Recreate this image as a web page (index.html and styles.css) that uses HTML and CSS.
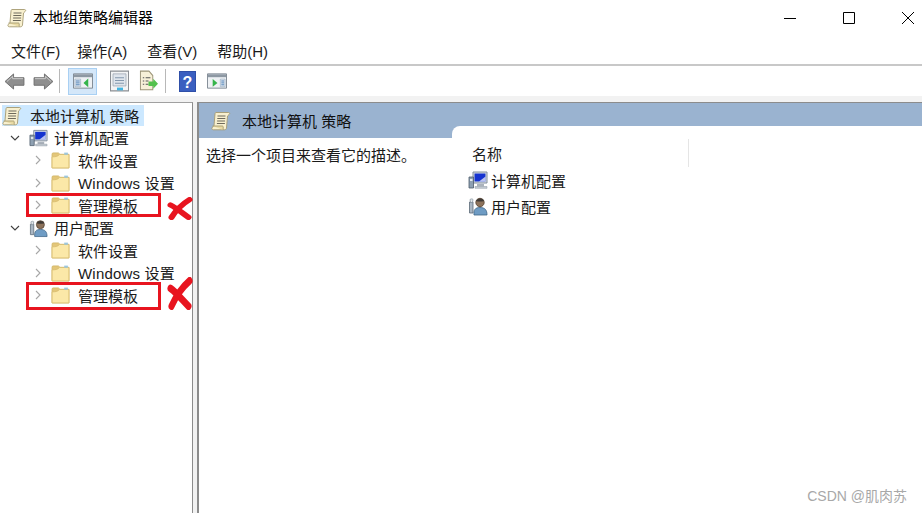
FILE: index.html
```html
<!DOCTYPE html>
<html lang="zh-CN">
<head>
    <meta charset="UTF-8">
    <title>本地组策略编辑器</title>
    <link rel="stylesheet" href="styles.css">
</head>
<body>
    <svg class="defs" width="0" height="0">
        <defs>
            <symbol id="scroll" viewBox="0 0 20 20">
                <path d="M5 1.500h12.500c1.200 0 1.500 1.200.7 1.900L16.500 5 15.500 17c-.2 1.200-1 1.800-2 1.800H2.500c-1.400 0-2-1.200-1.300-2.100L3 14.500 4 3c.1-1 .4-1.500 1-1.500z" fill="#f8f0cf" stroke="#a59a70" stroke-width=".9"/>
                <path d="M1.500 15h10c.8 0 .9 1.400.5 3.800" fill="#e9dba4" stroke="#a59a70" stroke-width=".9"/>
                <path d="M6.500 5h8M6.300 7.500h8M6.100 10h8M5.900 12.500h8" stroke="#6e6a5c" stroke-width="1"/>
            </symbol>
            <symbol id="folder" viewBox="0 0 18 18">
                <path d="M1 3.500c0-.8.4-1.200 1-1.200h5l1.500 1.400H17V16.500H1z" fill="#e3c679" stroke="#d2b566" stroke-width=".8"/>
                <path d="M1 6c3 0 5.500-.2 7-2.300h9v12.800H1z" fill="#fbe8a8" stroke="#d8bd70" stroke-width=".8"/>
                <path d="M12.500 2h3.500v2h-3.500z" fill="#9cc6de"/>
            </symbol>
            <symbol id="computer" viewBox="0 0 20 20">
                <path d="M5 2h14v11H5z" fill="#d8dde4" stroke="#7f8c9c"/>
                <path d="M6.500 3.500h11v8h-11z" fill="#1533d0"/>
                <path d="M11 11.500l6.500-5v5z" fill="#fff" opacity=".7"/>
                <path d="M9 14h7v2.500H9z" fill="#aab2bb"/>
                <path d="M7 16.500h12v1.800H7z" fill="#c5ccd4" stroke="#8a94a0" stroke-width=".5"/>
                <path d="M1 7h4.500v11H1z" fill="#8ea0b2" stroke="#4c5b6b" stroke-width=".8"/>
                <path d="M2 9h2.500v2H2z" fill="#e4e9ee"/>
            </symbol>
            <symbol id="user" viewBox="0 0 20 20">
                <path d="M6 19c-.5-5 1-7.500 6-7.500s7 2.500 7 7.500z" fill="#6f9cc4" stroke="#3e6486" stroke-width=".8"/>
                <circle cx="12" cy="6.500" r="4.200" fill="#8d735c" stroke="#54412f" stroke-width=".8"/>
                <path d="M8 5c1-3 7-3.500 8 0-2.500.8-5.500.8-8 0z" fill="#3f3a36"/>
                <path d="M1.500 6h3.500v11H1.500z" fill="#a9b6c3" stroke="#5a6876" stroke-width=".8"/>
                <path d="M2 3.500c1.200-.8 2.200-.8 3 0l-.5 3h-2z" fill="#dfe5ea" stroke="#6f7d8b" stroke-width=".6"/>
            </symbol>
            <symbol id="cross" viewBox="0 0 26 26" preserveAspectRatio="none">
                <path d="M3.500 9C9 12 14 17 21.500 23" fill="none" stroke="#e8141f" stroke-width="6" stroke-linecap="round"/>
                <path d="M22.500 3C16 7.500 9 15 4.500 23" fill="none" stroke="#e8141f" stroke-width="6" stroke-linecap="round"/>
            </symbol>
            <symbol id="chev-right" viewBox="0 0 8 10">
                <path d="M2 1l4 4-4 4" fill="none" stroke="#a6a6a6" stroke-width="1.100"/>
            </symbol>
            <symbol id="chev-down" viewBox="0 0 10 8">
                <path d="M1 2l4 4 4-4" fill="none" stroke="#404040" stroke-width="1.100"/>
            </symbol>
        </defs>
    </svg>

    <div class="window">
        <div class="titlebar">
            <svg class="title-icon"><use href="#scroll"/></svg>
            <span class="title-text">本地组策略编辑器</span>
            <div class="win-buttons">
                <svg class="win-btn" viewBox="0 0 14 14"><path d="M1 7.500h12" stroke="#000"/></svg>
                <svg class="win-btn" viewBox="0 0 14 14"><path d="M1.500 1.500h11v11h-11z" fill="none" stroke="#000"/></svg>
                <svg class="win-btn" viewBox="0 0 14 14"><path d="M1 1l12 12M13 1L1 13" stroke="#000"/></svg>
            </div>
        </div>

        <div class="menubar">
            <span class="menu-first">文件(F)</span>
            <span>操作(A)</span>
            <span>查看(V)</span>
            <span>帮助(H)</span>
        </div>

        <div class="toolbar">
            <svg class="tool arrow" viewBox="0 0 22 18"><path d="M1 9l9-8V5h11v8H10v4z" fill="#8f8f8f" stroke="#6e6e6e"/><path d="M3 9l6-5.500V6h11" fill="none" stroke="#cfcfcf"/></svg>
            <svg class="tool arrow" viewBox="0 0 22 18"><path d="M21 9l-9-8V5H1v8h11v4z" fill="#8f8f8f" stroke="#6e6e6e"/><path d="M2 6h11V3.500L19 9" fill="none" stroke="#cfcfcf"/></svg>
            <i class="sep sep-first"></i>
            <div class="tool-active">
                <svg class="tool-panel" viewBox="0 0 21 18"><path d="M.5 1.500h20v15H.5z" fill="#eef1f4" stroke="#7d8791"/><path d="M1 2h19v3H1z" fill="#8d98a3"/><path d="M2 7h6v8H2z" fill="#dfe7f0" stroke="#8fa3b8" stroke-width=".6"/><path d="M3 9h4M3 11h4M3 13h4" stroke="#4c7fb5"/><path d="M16 6.500l-5 4.500 5 4.500z" fill="#35b44a"/></svg>
            </div>
            <svg class="tool tool-doc" viewBox="0 0 19 20" preserveAspectRatio="none"><path d="M.5 1h18v18H.5z" fill="#f3f4f5" stroke="#8b8f94"/><path d="M3 3.500h13v11H3z" fill="#dfe5ec" stroke="#9aa4af" stroke-width=".7"/><path d="M5 7h9M5 9.500h9M5 12h9" stroke="#8498ad"/><path d="M7 16h6v2.500H7z" fill="#43b4e0"/></svg>
            <svg class="tool tool-doc" viewBox="0 0 20 20" preserveAspectRatio="none"><path d="M1.500 1h9l4 4v13h-13z" fill="#f7f0d8" stroke="#9c9478"/><path d="M4 7h1.500M7 7h5M4 10h1.500M7 10h3M4 13h1.500M7 13h3" stroke="#555"/><path d="M10 10.500h5V8l5 4.500-5 4.500v-2.500h-5z" fill="#54c14d"/></svg>
            <i class="sep"></i>
            <svg class="tool tool-help" viewBox="0 0 17 21"><path d="M0 0h17v21H0z" fill="#2f4fa8"/><path d="M1 1h15v19H1z" fill="#3a5fc0"/><text class="help-mark" x="8.500" y="16.500" text-anchor="middle">?</text></svg>
            <svg class="tool tool-panel-2" viewBox="0 0 21 18"><path d="M.5 1.500h20v15H.5z" fill="#eef1f4" stroke="#7d8791"/><path d="M1 2h19v3H1z" fill="#8d98a3"/><path d="M14 7h5v8h-5z" fill="#dfe7f0" stroke="#8fa3b8" stroke-width=".6"/><path d="M15 9h3M15 11h3M15 13h3" stroke="#4c7fb5"/><path d="M6 7l5 4-5 4z" fill="#35b44a"/></svg>
        </div>

        <div class="main">
            <div class="tree">
                <div class="tree-row level-0">
                    <div class="root-label">
                        <svg class="ico"><use href="#scroll"/></svg>
                        <span>本地计算机 策略</span>
                    </div>
                </div>
                <div class="tree-row level-1">
                    <svg class="chev-d"><use href="#chev-down"/></svg>
                    <svg class="ico"><use href="#computer"/></svg>
                    <span>计算机配置</span>
                </div>
                <div class="tree-row level-2">
                    <svg class="chev-r"><use href="#chev-right"/></svg>
                    <svg class="ico"><use href="#folder"/></svg>
                    <span>软件设置</span>
                </div>
                <div class="tree-row level-2">
                    <svg class="chev-r"><use href="#chev-right"/></svg>
                    <svg class="ico"><use href="#folder"/></svg>
                    <span class="latin">Windows 设置</span>
                </div>
                <div class="tree-row level-2 marked">
                    <svg class="chev-r"><use href="#chev-right"/></svg>
                    <svg class="ico"><use href="#folder"/></svg>
                    <span>管理模板</span>
                    <svg class="cross"><use href="#cross"/></svg>
                </div>
                <div class="tree-row level-1">
                    <svg class="chev-d"><use href="#chev-down"/></svg>
                    <svg class="ico"><use href="#user"/></svg>
                    <span>用户配置</span>
                </div>
                <div class="tree-row level-2">
                    <svg class="chev-r"><use href="#chev-right"/></svg>
                    <svg class="ico"><use href="#folder"/></svg>
                    <span>软件设置</span>
                </div>
                <div class="tree-row level-2">
                    <svg class="chev-r"><use href="#chev-right"/></svg>
                    <svg class="ico"><use href="#folder"/></svg>
                    <span class="latin">Windows 设置</span>
                </div>
                <div class="tree-row level-2 marked marked-tall">
                    <svg class="chev-r"><use href="#chev-right"/></svg>
                    <svg class="ico"><use href="#folder"/></svg>
                    <span>管理模板</span>
                    <svg class="cross cross-big"><use href="#cross"/></svg>
                </div>
            </div>

            <div class="detail">
                <div class="detail-head">
                    <svg class="ico"><use href="#scroll"/></svg>
                    <span>本地计算机 策略</span>
                    <i class="tab-notch"></i>
                </div>
                <div class="detail-body">
                    <p class="desc">选择一个项目来查看它的描述。</p>
                    <div class="list">
                        <div class="list-head"><span>名称</span></div>
                        <div class="list-row">
                            <svg class="ico"><use href="#computer"/></svg>
                            <span>计算机配置</span>
                        </div>
                        <div class="list-row">
                            <svg class="ico"><use href="#user"/></svg>
                            <span>用户配置</span>
                        </div>
                    </div>
                </div>
                <div class="watermark">CSDN @肌肉苏</div>
            </div>
        </div>
    </div>
</body>
</html>
```

FILE: styles.css
```css
*, *::before {
    box-sizing: border-box;
}
html, body {
    margin: 0;
    height: 100%;
}
body {
    font-family: "Liberation Sans", "Noto Sans CJK SC", sans-serif;
    font-size: 15px;
    color: #1a1a1a;
    background-color: #fff;
    overflow: hidden;
}
.defs {
    position: absolute;
}
.window {
    height: 513px;
    display: flex;
    flex-direction: column;
}
.ico {
    width: 20px;
    height: 20px;
    flex: none;
}
.titlebar {
    height: 36px;
    display: flex;
    align-items: center;
    padding-left: 7px;
    color: #000;
}
.title-icon {
    width: 20px;
    height: 20px;
}
.title-text {
    margin: 0 0 4px 6px;
}
.win-buttons {
    margin-left: auto;
    display: flex;
    gap: 45px;
    padding-right: 7px;
}
.win-btn {
    width: 14px;
    height: 14px;
}
.menubar {
    height: 30px;
    display: flex;
    align-items: center;
    gap: 20px;
    padding-left: 11px;
    border-bottom: 2px solid #c8c8c8;
}
.menu-first {
    margin-right: -3px;
}
.toolbar {
    height: 30px;
    display: flex;
    align-items: center;
    padding-left: 4px;
}
.tool {
    flex: none;
}
.arrow {
    width: 21px;
    height: 17px;
    margin-right: 8px;
}
.sep {
    width: 1px;
    height: 24px;
    margin: 0 13px 0 -3px;
    background-color: #b8b8b8;
}
.sep-first {
    margin-right: 8px;
}
.tool-active {
    width: 29px;
    height: 27px;
    display: flex;
    align-items: center;
    justify-content: center;
    background-color: #d4e7f9;
    border: 1px solid #a9d0f3;
    margin-right: 13px;
}
.tool-panel, .tool-panel-2 {
    width: 20px;
    height: 18px;
}
.tool-doc {
    width: 19px;
    height: 22px;
    margin-right: 10px;
}
.tool-help {
    width: 17px;
    height: 21px;
    margin-right: 11px;
}
.help-mark {
    font-size: 16px;
    font-weight: bold;
    fill: #fff;
}
.main {
    flex: 1;
    display: flex;
    background-color: #f2f2f2;
    padding-top: 6px;
}
.tree {
    width: 193px;
    background-color: #fff;
    border-top: 1px solid #a0a0a0;
    border-right: 1px solid #8c8c8c;
    padding-top: 2px;
    flex: none;
}
.tree-row {
    position: relative;
    height: 22.5px;
    display: flex;
    align-items: center;
    white-space: nowrap;
}
.latin {
    letter-spacing: .2px;
}
.level-0 {
    height: 21.5px;
    padding-left: 2px;
}
.root-label {
    display: flex;
    align-items: center;
    gap: 8px;
    height: 21px;
    padding-right: 5px;
    background-color: #cce8ff;
}
.level-1 {
    padding-left: 10px;
}
.level-1 .ico {
    margin: 0 6px 0 9px;
    width: 19px;
}
.level-2 {
    padding-left: 34px;
}
.level-2 .ico {
    margin: 0 8px 0 9px;
    width: 19px;
}
.chev-d {
    width: 10px;
    height: 8px;
    flex: none;
}
.chev-r {
    width: 8px;
    height: 10px;
    flex: none;
}
.marked::before {
    content: "";
    position: absolute;
    left: 26px;
    top: -1px;
    width: 135px;
    height: 24px;
    border: 3px solid #e8141f;
}
.marked-tall::before {
    top: -2px;
    height: 28px;
}
.cross {
    position: absolute;
    left: 167px;
    top: 3px;
    width: 26px;
    height: 23px;
}
.cross-big {
    top: -7px;
    height: 33px;
}
.detail {
    position: relative;
    flex: 1;
    margin-left: 4px;
    background-color: #fff;
    border-top: 1px solid #8c8c8c;
    border-left: 2px solid #8c8c8c;
}
.detail-head {
    position: relative;
    height: 35px;
    display: flex;
    align-items: center;
    gap: 11px;
    padding-left: 12px;
    background-color: #9ab3d0;
    color: #111;
}
.tab-notch {
    position: absolute;
    left: 253px;
    right: 0;
    bottom: 0;
    height: 12px;
    background-color: #fff;
    border-top-left-radius: 8px;
}
.detail-body {
    display: flex;
}
.desc {
    width: 264px;
    margin: 0;
    padding: 9px 0 0 7px;
    line-height: 18px;
}
.list {
    flex: 1;
    padding-top: 1px;
}
.list-head {
    width: 226px;
    height: 28px;
    display: flex;
    align-items: center;
    padding-left: 9px;
    border-right: 1px solid #e5e5e5;
}
.list-row {
    height: 26px;
    display: flex;
    align-items: center;
    gap: 3px;
    padding-left: 5px;
}
.watermark {
    position: absolute;
    right: 15px;
    bottom: 8px;
    font-size: 14px;
    color: #a8a8a8;
}
```
